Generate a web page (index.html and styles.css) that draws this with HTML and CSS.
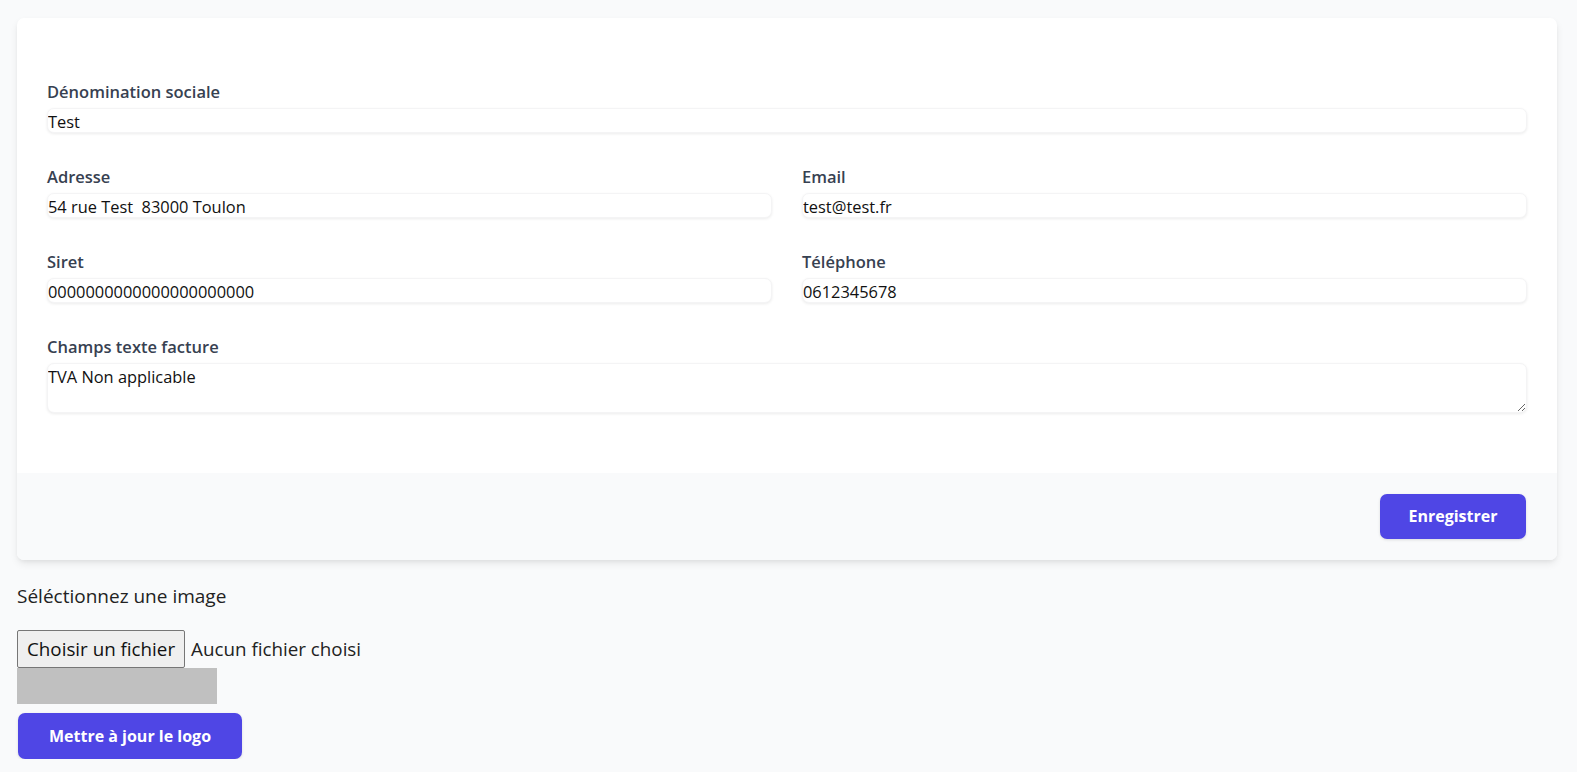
FILE: index.html
```html
<!DOCTYPE html>
<html lang="fr">
<head>
<meta charset="utf-8">
<title>Paramètres</title>
<link rel="stylesheet" href="styles.css">
</head>
<body>
<div class="page">
  <form class="card">
    <div class="card-body">
      <div class="field full">
        <label class="label" for="den">Dénomination sociale</label>
        <input class="input" id="den" type="text" value="Test">
      </div>
      <div class="field">
        <label class="label" for="adr">Adresse</label>
        <input class="input" id="adr" type="text" value="54 rue Test  83000 Toulon">
      </div>
      <div class="field">
        <label class="label" for="mail">Email</label>
        <input class="input" id="mail" type="text" value="test@test.fr">
      </div>
      <div class="field">
        <label class="label" for="siret">Siret</label>
        <input class="input" id="siret" type="text" value="0000000000000000000000">
      </div>
      <div class="field">
        <label class="label" for="tel">Téléphone</label>
        <input class="input" id="tel" type="text" value="0612345678">
      </div>
      <div class="field full">
        <label class="label" for="txt">Champs texte facture</label>
        <textarea class="textarea" id="txt" rows="2">TVA Non applicable</textarea>
      </div>
    </div>
    <div class="card-footer">
      <button class="btn" type="button">Enregistrer</button>
    </div>
  </form>

  <div class="logo-section">
    <p class="select-text">Séléctionnez une image</p>
    <div class="file-row">
      <span class="file-btn">Choisir un fichier</span>
      <span class="file-name">Aucun fichier choisi</span>
    </div>
    <div class="preview"></div>
    <button class="btn btn-logo" type="button">Mettre à jour le logo</button>
  </div>
</div>
</body>
</html>
```

FILE: styles.css
```css
* { box-sizing: border-box; }

html, body {
  margin: 0;
  padding: 0;
  background: #f9fafb;
  font-family: "Open Sans", "Noto Sans", sans-serif;
  color: #1f2937;
}

.page {
  padding: 18px 20px 0 17px;
}

.card {
  display: block;
  background: #ffffff;
  border-radius: 7px;
  box-shadow: 0 4px 8px -1px rgba(0, 0, 0, 0.09), 0 2px 4px -1px rgba(0, 0, 0, 0.05);
  overflow: hidden;
}

.card-body {
  display: grid;
  grid-template-columns: 1fr 1fr;
  column-gap: 30px;
  row-gap: 32px;
  padding: 61.6px 30px 60px 30px;
}

.field {
  display: flex;
  flex-direction: column;
}

.field.full {
  grid-column: 1 / span 2;
}

.label {
  font-size: 16.5px;
  line-height: 24px;
  font-weight: 600;
  color: #374151;
  margin-bottom: 4px;
}

.input,
.textarea {
  font-family: inherit;
  font-size: 16.4px;
  line-height: 20px;
  color: #111111;
  background: #ffffff;
  border: 1px solid #f4f4f5;
  border-radius: 7px;
  box-shadow: 0 1px 3px rgba(0, 0, 0, 0.08);
  padding: 3px 0 0 0;
  margin: 0;
  outline: none;
}

.input {
  height: 25px;
}

.textarea {
  height: 50px;
  resize: vertical;
}

.card-footer {
  display: flex;
  justify-content: flex-end;
  background: #f9fafb;
  padding: 21px 31px 21px 30px;
}

.btn {
  font-family: inherit;
  font-size: 16px;
  font-weight: 700;
  color: #ffffff;
  background: #4f46e5;
  border: none;
  border-radius: 7px;
  box-shadow: 0 1px 3px rgba(0, 0, 0, 0.12);
  height: 45px;
  width: 146px;
  padding: 0;
  cursor: pointer;
}

.logo-section {
  display: flex;
  flex-direction: column;
  align-items: flex-start;
}

.select-text {
  margin: 24px 0 22.4px 0;
  font-size: 19px;
  line-height: 24px;
  color: #222222;
}

.file-row {
  display: flex;
  align-items: center;
  gap: 6px;
}

.file-btn {
  display: flex;
  align-items: center;
  height: 37.7px;
  padding: 0 9px;
  font-size: 18.8px;
  color: #111111;
  background: #efefef;
  border: 1px solid #767676;
  border-radius: 2px;
}

.file-name {
  font-size: 18.8px;
  color: #222222;
}

.preview {
  width: 200px;
  height: 36.6px;
  background: #c0c0c0;
}

.btn-logo {
  width: 224px;
  height: 46px;
  margin: 8.4px 0 0 1px;
}
```
